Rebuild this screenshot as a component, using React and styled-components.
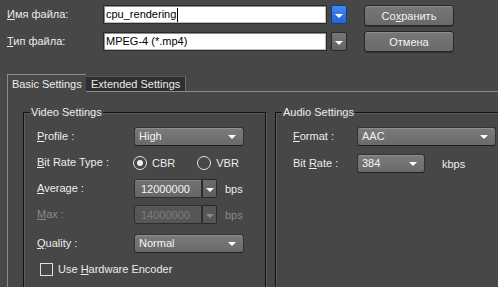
import React from 'react'
import styled, { createGlobalStyle, css } from 'styled-components'

const GlobalStyle = createGlobalStyle`
  body {
    margin: 0;
    background: #474747;
    font-family: "Liberation Sans", Arial, sans-serif;
    font-size: 11px;
    color: #ececec;
  }
  #root {
    width: 498px;
    height: 287px;
    overflow: hidden;
  }
`

const Page = styled.div`
  width: 498px;
  height: 287px;
  overflow: hidden;
  background: #474747;
`

const Top = styled.div`
  padding: 5px 0 0 7px;
`

const TopRow = styled.div`
  display: flex;
  align-items: ${p => p.$align || 'center'};
  height: 21px;
  margin-top: ${p => p.$mt || 0}px;
`

const TopLabel = styled.div`
  width: 96px;
  line-height: 13px;
  align-self: ${p => p.$self || 'center'};
  margin-top: ${p => p.$mt || 0}px;
`

const Key = styled.span`
  text-decoration: underline;
  text-underline-offset: 1px;
`

const TextField = styled.div`
  box-sizing: border-box;
  width: 224px;
  height: 19px;
  background: #fff;
  border: 1px solid #2b2b2b;
  box-shadow: inset 1px 1px 0 #8c8c8c, inset -1px -1px 0 #bdbdbd;
  color: #000;
  padding-left: 2px;
  display: flex;
  align-items: center;
  line-height: 13px;
`

const Caret = styled.span`
  display: inline-block;
  width: 1px;
  height: 14px;
  background: #000;
  margin-left: 1px;
`

const arrow = css`
  &::after {
    content: '';
    width: 0;
    height: 0;
    border-left: 4px solid transparent;
    border-right: 4px solid transparent;
    border-top: 4px solid ${p => (p.$disabled ? '#8a8a8a' : '#ffffff')};
  }
`

const DropButton = styled.div`
  box-sizing: border-box;
  width: 16px;
  height: 19px;
  margin-left: 4px;
  border-radius: 2px;
  border: 1px solid ${p => (p.$blue ? '#123f8c' : '#2a2a2a')};
  background: ${p =>
    p.$blue ? 'linear-gradient(#4189ee, #2464cf)' : 'linear-gradient(#777, #646464)'};
  display: flex;
  align-items: center;
  justify-content: center;
  padding-top: 2px;
  ${arrow}
`

const Button = styled.div`
  box-sizing: border-box;
  width: 90px;
  height: 21px;
  margin-left: 17px;
  border: 1px solid #272727;
  border-radius: 3px;
  background: linear-gradient(#777777, #6a6a6a);
  box-shadow: inset 0 1px 0 #8d8d8d, 0 1px 0 #303030;
  color: #f2f2f2;
  display: flex;
  align-items: center;
  justify-content: center;
  font-size: 11px;
`

const TabStrip = styled.div`
  display: flex;
  align-items: flex-end;
  margin-top: 22px;
  padding-left: 7px;
`

const Tab = styled.div`
  box-sizing: border-box;
  line-height: 13px;
  ${p =>
    p.$active
      ? css`
          height: 18px;
          width: 79px;
          padding: 3px 0 0 4px;
          border-top: 1px solid #8a8a8a;
          border-left: 1px solid #8a8a8a;
          background: #474747;
        `
      : css`
          height: 16px;
          width: 100px;
          padding: 1px 0 0 5px;
          background: #2f2f2f;
          border-top: 1px solid #5a5a5a;
          border-right: 1px solid #6c6c6c;
          border-bottom: 1px solid #8a8a8a;
        `}
`

const TabLine = styled.div`
  flex: 1;
  border-bottom: 1px solid #8a8a8a;
`

const Panel = styled.div`
  margin-left: 7px;
  border-left: 1px solid #8a8a8a;
  padding: 14px 0 0 15px;
  display: flex;
  gap: 9px;
  height: 220px;
`

const Group = styled.fieldset`
  box-sizing: border-box;
  margin: 0;
  min-width: 0;
  flex: none;
  width: ${p => p.$w}px;
  height: 240px;
  padding: 0 0 0 ${p => p.$pl}px;
  border: 1px solid #121212;
  box-shadow: inset 1px 1px 0 #5c5c5c, 1px 1px 0 #5c5c5c;
`

const Legend = styled.legend`
  margin-left: ${p => p.$ml}px;
  padding: 0 1px;
  line-height: 13px;
  font-size: 11px;
  color: #ececec;
`

const Row = styled.div`
  display: flex;
  align-items: center;
  height: ${p => p.$h || 19}px;
  margin-top: ${p => p.$mt}px;
`

const Label = styled.div`
  width: ${p => p.$w}px;
  flex: none;
  color: ${p => (p.$disabled ? '#8a8a8a' : '#ececec')};
  line-height: 13px;
`

const Select = styled.div`
  box-sizing: border-box;
  width: ${p => p.$w}px;
  height: 19px;
  border: 1px solid #333;
  border-bottom-color: #1e1e1e;
  border-radius: 3px;
  background: linear-gradient(#7b7b7b, #6a6a6a);
  box-shadow: inset 0 1px 0 #8e8e8e;
  color: #f4f4f4;
  padding: 0 7px 0 4px;
  display: flex;
  align-items: center;
  justify-content: space-between;
  line-height: 13px;
  ${arrow}
`

const ComboField = styled.div`
  box-sizing: border-box;
  width: 68px;
  height: 19px;
  border: 1px solid #2e2e2e;
  border-radius: 2px 0 0 2px;
  background: ${p => (p.$disabled ? '#565656' : 'linear-gradient(#727272, #666)')};
  box-shadow: inset 0 1px 0 ${p => (p.$disabled ? '#5e5e5e' : '#858585')};
  color: ${p => (p.$disabled ? '#7c7c7c' : '#f4f4f4')};
  padding-left: 6px;
  display: flex;
  align-items: center;
`

const ComboButton = styled.div`
  box-sizing: border-box;
  width: 15px;
  height: 19px;
  border: 1px solid #2a2a2a;
  border-radius: 0 2px 2px 0;
  background: ${p => (p.$disabled ? '#565656' : 'linear-gradient(#6c6c6c, #5c5c5c)')};
  display: flex;
  align-items: center;
  justify-content: center;
  padding-top: 2px;
  ${arrow}
`

const Unit = styled.div`
  margin-left: ${p => p.$ml}px;
  color: ${p => (p.$disabled ? '#8a8a8a' : '#ececec')};
`

const Radio = styled.span`
  box-sizing: border-box;
  width: 14px;
  height: 14px;
  border-radius: 50%;
  border: 1.5px solid #e6e6e6;
  display: flex;
  align-items: center;
  justify-content: center;
  flex: none;
  &::after {
    content: '';
    width: 6px;
    height: 6px;
    border-radius: 50%;
    background: ${p => (p.$on ? '#f2f2f2' : 'transparent')};
  }
`

const RadioText = styled.span`
  margin: 0 ${p => p.$mr || 0}px 0 5px;
`

const Check = styled.span`
  box-sizing: border-box;
  width: 13px;
  height: 13px;
  border: 1px solid #e0e0e0;
  margin: 0 5px 0 3px;
  flex: none;
`

const CheckText = styled.span`
  line-height: 13px;
`

export default function App() {
  return (
    <Page>
      <GlobalStyle />
      <Top>
        <TopRow $align="flex-start">
          <TopLabel $self="flex-start" $mt={3}>
            <Key>И</Key>мя файла:
          </TopLabel>
          <TextField>
            cpu_rendering<Caret />
          </TextField>
          <DropButton $blue />
          <Button>
            Со<Key>х</Key>ранить
          </Button>
        </TopRow>
        <TopRow $mt={5}>
          <TopLabel>
            <Key>Т</Key>ип файла:
          </TopLabel>
          <TextField>MPEG-4 (*.mp4)</TextField>
          <DropButton />
          <Button>Отмена</Button>
        </TopRow>
      </Top>

      <TabStrip>
        <Tab $active>Basic Settings</Tab>
        <Tab>Extended Settings</Tab>
        <TabLine />
      </TabStrip>

      <Panel>
        <Group $w={243} $pl={13}>
          <Legend $ml={-7}>Video Settings</Legend>
          <Row $mt={8}>
            <Label $w={97}>
              <Key>P</Key>rofile :
            </Label>
            <Select $w={110}>High</Select>
          </Row>
          <Row $mt={7}>
            <Label $w={96}>
              <Key>B</Key>it Rate Type :
            </Label>
            <Radio $on />
            <RadioText $mr={22}>CBR</RadioText>
            <Radio />
            <RadioText>VBR</RadioText>
          </Row>
          <Row $mt={7}>
            <Label $w={97}>
              <Key>A</Key>verage :
            </Label>
            <ComboField>12000000</ComboField>
            <ComboButton />
            <Unit $ml={8}>bps</Unit>
          </Row>
          <Row $mt={7}>
            <Label $w={97} $disabled>
              <Key>M</Key>ax :
            </Label>
            <ComboField $disabled>14000000</ComboField>
            <ComboButton $disabled />
            <Unit $ml={8} $disabled>
              bps
            </Unit>
          </Row>
          <Row $mt={10}>
            <Label $w={97}>
              <Key>Q</Key>uality :
            </Label>
            <Select $w={110}>Normal</Select>
          </Row>
          <Row $mt={10} $h={13}>
            <Check />
            <CheckText>
              Use <Key>H</Key>ardware Encoder
            </CheckText>
          </Row>
        </Group>

        <Group $w={260} $pl={17}>
          <Legend $ml={-11}>Audio Settings</Legend>
          <Row $mt={8}>
            <Label $w={64}>
              <Key>F</Key>ormat :
            </Label>
            <Select $w={139}>AAC</Select>
          </Row>
          <Row $mt={8}>
            <Label $w={64}>
              Bit <Key>R</Key>ate :
            </Label>
            <Select $w={68}>384</Select>
            <Unit $ml={17}>kbps</Unit>
          </Row>
        </Group>
      </Panel>
    </Page>
  )
}
